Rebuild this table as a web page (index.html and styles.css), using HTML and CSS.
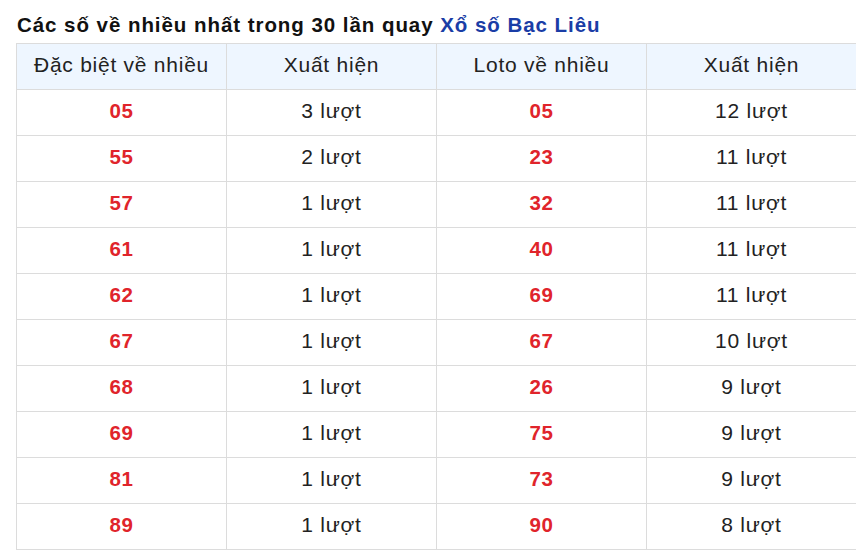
FILE: index.html
```html
<!DOCTYPE html>
<html lang="vi">
<head>
<meta charset="utf-8">
<link rel="stylesheet" href="styles.css">
</head>
<body>
<div class="wrap">
  <h2 class="title">Các số về nhiều nhất trong 30 lần quay <span class="prov">Xổ số Bạc Liêu</span></h2>
  <table class="stats">
    <thead>
      <tr><th>Đặc biệt về nhiều</th><th>Xuất hiện</th><th>Loto về nhiều</th><th>Xuất hiện</th></tr>
    </thead>
    <tbody>
      <tr><td class="num">05</td><td>3 lượt</td><td class="num">05</td><td>12 lượt</td></tr>
      <tr><td class="num">55</td><td>2 lượt</td><td class="num">23</td><td>11 lượt</td></tr>
      <tr><td class="num">57</td><td>1 lượt</td><td class="num">32</td><td>11 lượt</td></tr>
      <tr><td class="num">61</td><td>1 lượt</td><td class="num">40</td><td>11 lượt</td></tr>
      <tr><td class="num">62</td><td>1 lượt</td><td class="num">69</td><td>11 lượt</td></tr>
      <tr><td class="num">67</td><td>1 lượt</td><td class="num">67</td><td>10 lượt</td></tr>
      <tr><td class="num">68</td><td>1 lượt</td><td class="num">26</td><td>9 lượt</td></tr>
      <tr><td class="num">69</td><td>1 lượt</td><td class="num">75</td><td>9 lượt</td></tr>
      <tr><td class="num">81</td><td>1 lượt</td><td class="num">73</td><td>9 lượt</td></tr>
      <tr><td class="num">89</td><td>1 lượt</td><td class="num">90</td><td>8 lượt</td></tr>
    </tbody>
  </table>
</div>
</body>
</html>
```
FILE: styles.css
```css
html, body {
  margin: 0;
  padding: 0;
  background: #fff;
  overflow: hidden;
}
body {
  font-family: "Liberation Sans", Arial, sans-serif;
  color: #222;
}
.wrap {
  padding: 11px 0 0 16px;
  width: 842px;
}
.title {
  margin: 0 0 4px 1px;
  font-size: 20.5px;
  line-height: 28px;
  letter-spacing: 0.95px;
  font-weight: bold;
  color: #111;
}
.prov {
  color: #1a3da6;
}
.stats {
  border-collapse: collapse;
  width: 841px;
  table-layout: fixed;
}
.stats th, .stats td {
  border: 1px solid #dcdcdc;
  height: 46px;
  padding: 0 0 3px;
  text-align: center;
  font-size: 21px;
  letter-spacing: 0.75px;
  color: #222;
  box-sizing: border-box;
}
.stats th {
  font-weight: normal;
  background: #eef6ff;
}
.stats td.num {
  color: #e0242b;
  font-weight: bold;
  font-size: 20.5px;
  letter-spacing: 0.6px;
}
```
